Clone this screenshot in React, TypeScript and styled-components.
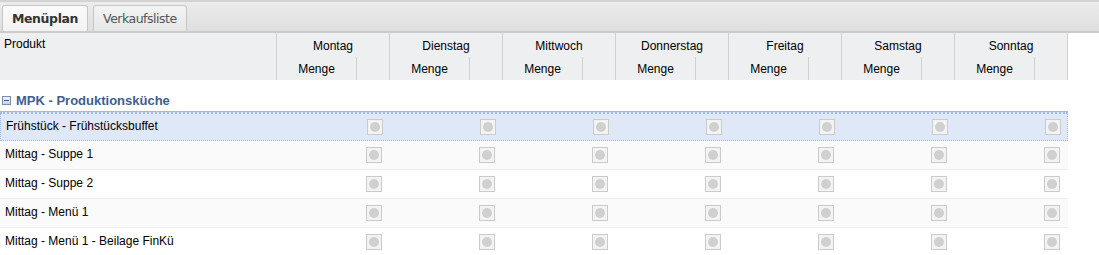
import React from "react";
import styled, { createGlobalStyle } from "styled-components";

const days = ["Montag", "Dienstag", "Mittwoch", "Donnerstag", "Freitag", "Samstag", "Sonntag"];

const rows = [
    "Frühstück - Frühstücksbuffet",
    "Mittag - Suppe 1",
    "Mittag - Suppe 2",
    "Mittag - Menü 1",
    "Mittag - Menü 1 - Beilage FinKü",
];

const GlobalStyle = createGlobalStyle`
    body {
        margin: 0;
        background: #fff;
        font-family: "Liberation Sans", Arial, sans-serif;
        font-size: 12px;
        color: #000;
    }
`;

const Page = styled.div`
    width: 1099px;
    overflow: hidden;
`;

const TabBar = styled.div`
    height: 29px;
    display: flex;
    align-items: flex-end;
    gap: 5px;
    padding-left: 2px;
    border-top: 2px solid #d3d3d3;
    border-bottom: 2px solid #cbcbcb;
    background: linear-gradient(#ececec, #dedede);
`;

const Tab = styled.div<{ $active?: boolean }>`
    height: 26px;
    box-sizing: border-box;
    padding: 0 9px;
    display: flex;
    align-items: center;
    border: 1px solid #c6c6c6;
    border-bottom: none;
    border-radius: 3px 3px 0 0;
    background: ${(p) => (p.$active ? "linear-gradient(#fbfbfb, #f2f2f2)" : "linear-gradient(#f4f4f4, #e6e6e6)")};
    color: ${(p) => (p.$active ? "#333" : "#555")};
    font-family: "DejaVu Sans", Tahoma, sans-serif;
    font-size: 12.5px;
    font-weight: ${(p) => (p.$active ? 700 : 400)};
    letter-spacing: ${(p) => (p.$active ? "-0.4px" : "-0.5px")};
`;

const Grid = styled.div`
    width: 1068px;
    display: grid;
    grid-template-columns: 277px repeat(7, 113px);
`;

const HeaderRow = styled(Grid)`
    height: 47px;
    background: #eeeff1;
`;

const ProduktHead = styled.div`
    padding: 4px 0 0 4px;
    border-right: 1px solid #d0d0d0;
`;

const DayHead = styled.div`
    display: grid;
    grid-template-rows: 24px 23px;
    grid-template-columns: 80px 1fr;
    border-right: 1px solid #d0d0d0;
`;

const DayName = styled.div`
    grid-column: 1 / 3;
    text-align: center;
    padding-top: 6px;
`;

const SubHead = styled.div<{ $line?: boolean }>`
    text-align: center;
    padding-top: 5px;
    border-right: ${(p) => (p.$line ? "1px solid #d0d0d0" : "none")};
`;

const GroupRow = styled.div`
    width: 1068px;
    margin-top: 8px;
    height: 24px;
    display: flex;
    align-items: center;
    gap: 5px;
    padding: 2px 0 0 2px;
    box-sizing: border-box;
    border-bottom: 1px solid #99bbe8;
    color: #3f5d90;
    font-weight: 700;
    font-size: 13px;
`;

const Collapse = styled.span`
    width: 9px;
    height: 9px;
    box-sizing: border-box;
    border: 1px solid #7a8ea8;
    background: linear-gradient(#eef2f7, #c8d3e2);
    display: flex;
    align-items: center;
    justify-content: center;
    &::after {
        content: "";
        width: 5px;
        height: 1px;
        background: #3f5d90;
    }
`;

const DataRow = styled(Grid)<{ $selected?: boolean; $alt?: boolean }>`
    height: 29px;
    box-sizing: border-box;
    align-items: center;
    background: ${(p) => (p.$selected ? "#dfe8f6" : p.$alt ? "#fafafa" : "#fff")};
    border-bottom: 1px solid #ededed;
    ${(p) => p.$selected && "border: 1px dotted #a3bae9; border-top: 2px dotted #a3bae9;"}
`;

const Name = styled.div`
    padding-left: 5px;
    margin-top: -2px;
`;

const DayCell = styled.div`
    display: grid;
    grid-template-columns: 80px 1fr;
    align-items: center;
`;

const Check = styled.span`
    grid-column: 2;
    justify-self: center;
    width: 16px;
    height: 16px;
    box-sizing: border-box;
    border: 1px solid #cbcbcb;
    background: #f3f3f3;
    display: flex;
    align-items: center;
    justify-content: center;
    &::after {
        content: "";
        width: 10px;
        height: 10px;
        border-radius: 50%;
        background: #d0d0d0;
    }
`;

export default function App() {
    return (
        <Page>
            <GlobalStyle />
            <TabBar>
                <Tab $active>Menüplan</Tab>
                <Tab>Verkaufsliste</Tab>
            </TabBar>
            <HeaderRow>
                <ProduktHead>Produkt</ProduktHead>
                {days.map((d) => (
                    <DayHead key={d}>
                        <DayName>{d}</DayName>
                        <SubHead $line>Menge</SubHead>
                        <SubHead />
                    </DayHead>
                ))}
            </HeaderRow>
            <GroupRow>
                <Collapse />
                MPK - Produktionsküche
            </GroupRow>
            {rows.map((r, i) => (
                <DataRow key={r} $selected={i === 0} $alt={i % 2 === 1}>
                    <Name>{r}</Name>
                    {days.map((d) => (
                        <DayCell key={d}>
                            <Check />
                        </DayCell>
                    ))}
                </DataRow>
            ))}
        </Page>
    );
}
